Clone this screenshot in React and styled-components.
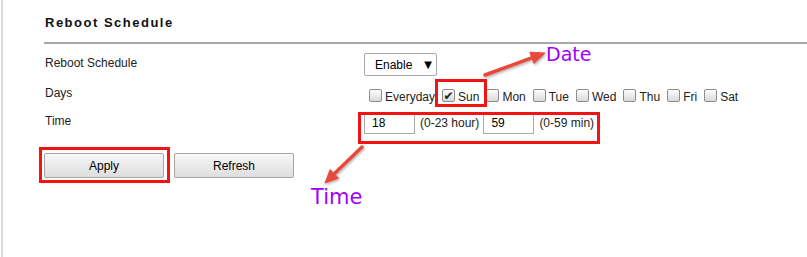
import styled, { createGlobalStyle } from "styled-components";

const GlobalStyle = createGlobalStyle`
  body {
    margin: 0;
    background: #fff;
    font-family: "Liberation Sans", Arial, sans-serif;
  }
`;

const DAYS = [
  { name: "Everyday" },
  { name: "Sun", checked: true },
  { name: "Mon" },
  { name: "Tue" },
  { name: "Wed" },
  { name: "Thu" },
  { name: "Fri" },
  { name: "Sat" },
];

const App = () => {
  return (
    <Stage>
      <GlobalStyle />
      <Page>
        <Title>Reboot Schedule</Title>
        <Divider />
        <Row $mt={9} $h={23}>
          <Label $pt={3}>Reboot Schedule</Label>
          <Select>
            <span>Enable</span>
            <Caret>▼</Caret>
          </Select>
        </Row>
        <Row $mt={10} $h={22}>
          <Label $pt={0}>Days</Label>
          <DayList>
            {DAYS.map((d) => (
              <DayItem key={d.name}>
                <Box>{d.checked && <Tick>✔</Tick>}</Box>
                {d.name}
              </DayItem>
            ))}
          </DayList>
        </Row>
        <Row $mt={4} $h={22}>
          <Label $pt={2}>Time</Label>
          <TimeGroup>
            <NumInput>18</NumInput>
            <Hint>(0-23 hour)</Hint>
            <NumInput>59</NumInput>
            <Hint>(0-59 min)</Hint>
          </TimeGroup>
        </Row>
        <Buttons>
          <Button>Apply</Button>
          <Button>Refresh</Button>
        </Buttons>
      </Page>

      <Marks width="807" height="257" viewBox="0 0 807 257">
        <defs>
          <filter id="sh" x="-20%" y="-20%" width="140%" height="140%">
            <feDropShadow dx="1" dy="1.5" stdDeviation="1.2" floodColor="#000" floodOpacity="0.3" />
          </filter>
        </defs>
        <g fill="none" stroke="#f21414" strokeWidth="3">
          <rect x="436.5" y="80.5" width="49" height="25" />
          <rect x="359.5" y="113.5" width="239" height="29" />
          <rect x="40.5" y="148.5" width="128" height="33" />
        </g>
        <g filter="url(#sh)" fill="#e8493b" stroke="#e8493b">
          <line x1="485" y1="75" x2="533" y2="57.4" strokeWidth="3.5" strokeLinecap="round" />
          <polygon points="545,53 534,63.4 529.8,52.2" strokeWidth="1" strokeLinejoin="round" />
          <line x1="362" y1="147" x2="334" y2="174" strokeWidth="3.5" strokeLinecap="round" />
          <polygon points="325,183 338.5,178.2 330.1,169.6" strokeWidth="1" strokeLinejoin="round" />
        </g>
      </Marks>
      <Note $x={546} $y={45} $size={19}>Date</Note>
      <Note $x={311} $y={187} $size={21}>Time</Note>
    </Stage>
  );
};

export default App;

const Stage = styled.div`
  position: relative;
  width: 807px;
  height: 257px;
  overflow: hidden;
`;

const Page = styled.div`
  box-sizing: border-box;
  height: 257px;
  margin-left: 1px;
  border-left: 2px solid #dadada;
  padding: 15px 0 0 41px;
`;

const Title = styled.div`
  font-size: 13px;
  line-height: 16px;
  font-weight: bold;
  letter-spacing: 1.5px;
  color: #111;
  padding-left: 1px;
  margin-bottom: 11px;
`;

const Divider = styled.div`
  border-top: 2px solid #a8a8a8;
`;

const Row = styled.div`
  display: grid;
  grid-template-columns: 320px 1fr;
  height: ${(p) => p.$h}px;
  margin-top: ${(p) => p.$mt}px;
`;

const Label = styled.div`
  font-size: 12px;
  line-height: 14px;
  color: #222;
  padding: ${(p) => p.$pt}px 0 0 1px;
`;

const Select = styled.div`
  box-sizing: border-box;
  width: 73px;
  height: 23px;
  border: 1px solid #a9a9a9;
  border-radius: 2px;
  display: flex;
  align-items: center;
  justify-content: space-between;
  padding: 0 4px 0 10px;
  font-size: 12px;
  color: #000;
`;

const Caret = styled.span`
  font-family: "DejaVu Sans", sans-serif;
  font-size: 10px;
`;

const DayList = styled.div`
  display: flex;
  align-items: center;
  gap: 7px;
  padding-left: 5px;
`;

const DayItem = styled.label`
  display: flex;
  align-items: center;
  gap: 3px;
  font-size: 12px;
  color: #222;
`;

const Box = styled.span`
  box-sizing: border-box;
  width: 13px;
  height: 13px;
  margin-bottom: 3px;
  border: 1px solid #8c8c8c;
  border-radius: 2px;
  background: linear-gradient(#fdfdfd, #d9d9d9);
  display: flex;
  align-items: center;
  justify-content: center;
`;

const Tick = styled.span`
  font-family: "DejaVu Sans", sans-serif;
  font-size: 12px;
  line-height: 1;
  color: #222;
`;

const TimeGroup = styled.div`
  display: flex;
  align-items: center;
`;

const NumInput = styled.div`
  box-sizing: border-box;
  width: 51px;
  height: 22px;
  border: 1px solid #aaa;
  padding-left: 7px;
  display: flex;
  align-items: center;
  font-size: 12px;
  color: #000;
`;

const Hint = styled.span`
  font-size: 12px;
  color: #222;
  margin: 0 4px 0 5px;
`;

const Buttons = styled.div`
  display: flex;
  gap: 10px;
  margin-top: 19px;
`;

const Button = styled.button`
  box-sizing: border-box;
  width: 120px;
  height: 25px;
  border: 1px solid #a6a6a6;
  border-radius: 2px;
  background: linear-gradient(#f7f7f7, #dedede);
  font-family: "Liberation Sans", Arial, sans-serif;
  font-size: 12px;
  color: #000;
  padding: 0;
`;

const Marks = styled.svg`
  position: absolute;
  left: 0;
  top: 0;
  pointer-events: none;
`;

const Note = styled.span`
  position: absolute;
  left: ${(p) => p.$x}px;
  top: ${(p) => p.$y}px;
  font-family: "DejaVu Sans", Verdana, sans-serif;
  font-size: ${(p) => p.$size}px;
  line-height: ${(p) => p.$size}px;
  color: #a000ff;
`;
